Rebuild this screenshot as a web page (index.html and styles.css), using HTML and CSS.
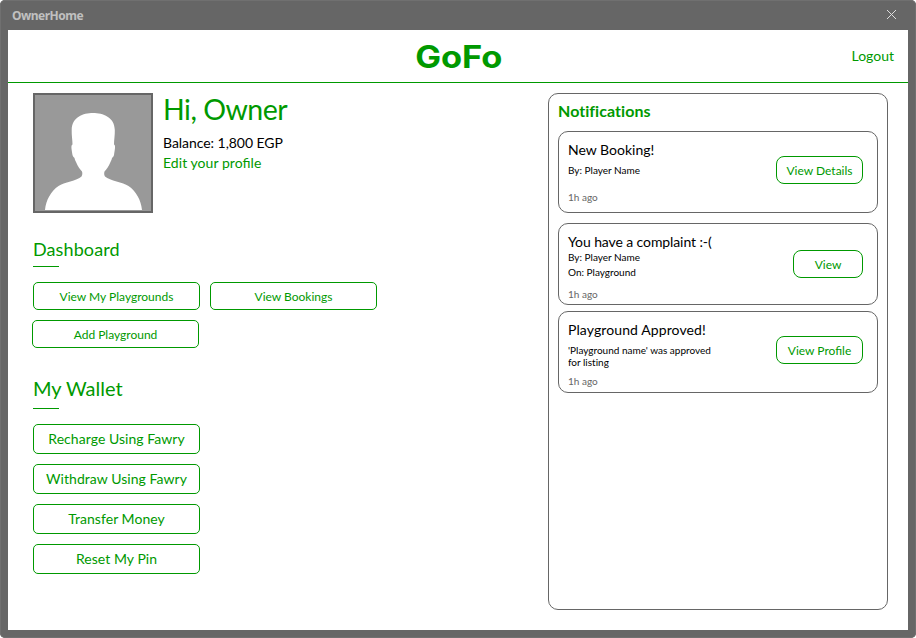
FILE: index.html
```html
<!DOCTYPE html>
<html lang="en">
<head>
<meta charset="utf-8">
<title>OwnerHome</title>
<link rel="stylesheet" href="styles.css">
</head>
<body>
<div class="window">
  <div class="titlebar">
    <span class="window-title">OwnerHome</span>
    <svg class="close" width="11" height="11" viewBox="0 0 11 11"><path d="M1 1L10 10M10 1L1 10"/></svg>
  </div>
  <div class="page">
    <header class="header">
      <div class="logo">GoFo</div>
      <a class="logout">Logout</a>
    </header>
    <main class="content">
      <div class="left">
        <section class="profile">
          <svg class="avatar" width="120" height="120" viewBox="0 0 120 120">
            <rect x="1" y="1" width="118" height="118" fill="#999" stroke="#666" stroke-width="2"/>
            <path fill="#fff" d="M60 20C70 20 81.500 24 81.800 37C82 42 81 47 81 51.500C83 52.500 81.700 57 81 62C80.500 64 79.500 64 79 65C78.500 67 78.500 67 77.500 69C75.500 74 73.500 76 71.500 78.500C71 80 71 82 72 83.500C77 88 90 89 95.500 93C103 98 108 107 109 117H12C13 107 18 98 25.500 93C31 89 44 88 48.500 83.500C49.500 82 49.500 80 49 78.500C47 76 45 74 43 69C42 67 42 67 41.500 65C41 64 40 64 39.500 62C38.800 57 37.500 52.500 39.500 51.500C39.500 47 38.500 42 38.700 37C39 24 50 20 60 20Z"/>
          </svg>
          <div class="profile-info">
            <h1>Hi, Owner</h1>
            <p>Balance: 1,800 EGP</p>
            <a>Edit your profile</a>
          </div>
        </section>
        <section class="dashboard">
          <h2>Dashboard</h2>
          <div class="rule"></div>
          <div class="row">
            <button>View My Playgrounds</button>
            <button>View Bookings</button>
          </div>
          <div class="row second"><button>Add Playground</button></div>
        </section>
        <section class="wallet">
          <h2>My Wallet</h2>
          <div class="rule"></div>
          <div class="actions">
            <button>Recharge Using Fawry</button>
            <button>Withdraw Using Fawry</button>
            <button>Transfer Money</button>
            <button>Reset My Pin</button>
          </div>
        </section>
      </div>
      <aside class="notifications">
        <h3>Notifications</h3>
        <article class="card booking">
          <div class="message">
            <h4>New Booking!</h4>
            <p>By: Player Name</p>
            <time>1h ago</time>
          </div>
          <button>View Details</button>
        </article>
        <article class="card complaint">
          <div class="message">
            <h4>You have a complaint :-(</h4>
            <p>By: Player Name<br>On: Playground</p>
            <time>1h ago</time>
          </div>
          <button class="narrow">View</button>
        </article>
        <article class="card approved">
          <div class="message">
            <h4>Playground Approved!</h4>
            <p>'Playground name' was approved<br>for listing</p>
            <time>1h ago</time>
          </div>
          <button>View Profile</button>
        </article>
      </aside>
    </main>
  </div>
</div>
</body>
</html>
```
FILE: styles.css
```css
* { box-sizing: border-box; margin: 0; padding: 0; }
body { background: #fff; color: #000; font-family: Lato, sans-serif; font-size: 14px; overflow: hidden; }
h1, h2, h4 { font-weight: 400; }
.window { width: 916px; height: 638px; padding: 0 8px 8px; background: #666; border-radius: 5px; box-shadow: inset 0 0 0 1px #707070; }
.titlebar { display: flex; justify-content: space-between; height: 30px; padding: 9px 11px 0 4px; }
.window-title { color: #c0c0c0; font: bold 12px/14px "Noto Sans", sans-serif; letter-spacing: -0.5px; }
.close { stroke: #ddd; stroke-width: 1; fill: none; }
.page { height: 600px; background: #fff; }
.header { display: grid; grid-template-columns: 1fr auto 1fr; align-items: center; height: 53px; padding: 0 14px; border-bottom: 1px solid #090; color: #090; }
.logo { grid-column: 2; font-family: Inter, sans-serif; font-size: 31px; line-height: 40px; font-weight: 700; transform: translate(0.5px, 1px) scaleX(1.11); }
.logout { justify-self: end; line-height: 20px; }
.content { display: flex; justify-content: space-between; padding: 10px 20px 0 25px; }
button { border: 1px solid #090; border-radius: 5px; background: #fff; color: #090; font-family: inherit; }
.profile { display: flex; gap: 10px; height: 120px; color: #090; }
.profile h1 { font-size: 28.500px; line-height: 32px; margin-bottom: 8px; letter-spacing: -0.5px; }
.profile p { color: #000; line-height: 20px; letter-spacing: -0.05px; }
.profile a { line-height: 20px; letter-spacing: 0.05px; font-feature-settings: "liga"; }
.dashboard, .wallet { color: #090; }
.dashboard { padding-top: 24px; }
.dashboard h2 { font-size: 18px; line-height: 24px; letter-spacing: 0.1px; }
.rule { width: 26px; height: 1px; background: #090; }
.dashboard .rule { margin: 5px 0 15px; }
.row { display: flex; gap: 10px; }
.row button { width: 167px; height: 28px; font-size: 12px; padding-top: 1px; }
.second { margin: 10px 0 0 -1px; }
.wallet { padding-top: 28px; }
.wallet h2 { font-size: 20px; line-height: 24px; }
.wallet .rule { margin: 8px 0 15px; }
.actions { display: flex; flex-direction: column; gap: 10px; }
.actions button { width: 167px; height: 30px; font-size: 14px; padding-bottom: 2px; letter-spacing: 0.05px; }
.notifications { width: 340px; height: 517px; padding: 8px 9px; border: 1px solid #666; border-radius: 10px; }
.notifications h3 { color: #090; font-size: 16px; line-height: 18px; margin-bottom: 11px; letter-spacing: 0.05px; }
.card { display: flex; justify-content: space-between; align-items: center; height: 82px; padding: 0 14px 0 9px; border: 1px solid #666; border-radius: 10px; }
.message { display: flex; flex-direction: column; height: 80px; }
.card h4 { font-size: 14px; line-height: 20px; }
.card p { font-size: 10px; }
.card time { margin-top: auto; color: #666; font-size: 10px; line-height: 12px; }
.card button { width: 87px; height: 28px; border-radius: 8px; font-size: 12px; padding-top: 1px; margin-top: -4px; }
.card .narrow { width: 70px; margin-top: 0; }
.booking .message { padding: 8px 0 9px; }
.booking p { line-height: 20px; }
.complaint { margin-top: 10px; }
.complaint h4 { letter-spacing: -0.1px; }
.complaint .message { padding: 8px 0 4px; }
.complaint p { line-height: 15px; margin-top: -2px; }
.approved { margin-top: 6px; }
.approved h4 { letter-spacing: 0.1px; }
.approved .message { padding: 8px 0 5px; }
.approved p { line-height: 12px; margin-top: 4px; font-variant-ligatures: none; }
```
